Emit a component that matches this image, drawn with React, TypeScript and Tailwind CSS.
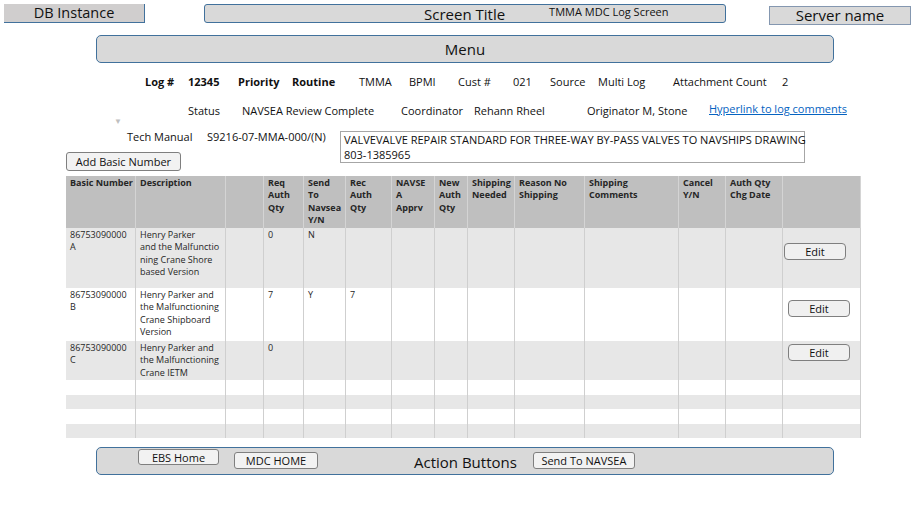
import React from "react";

const cols = "grid grid-cols-[70px_90px_38px_40px_42px_46px_43px_33px_47px_70px_94px_47px_57px_78px]";

const headers: React.ReactNode[] = [
  <>Basic Number</>,
  <>Description</>,
  <></>,
  <>Req<br />Auth<br />Qty</>,
  <>Send<br />To<br />Navsea<br />Y/N</>,
  <>Rec<br />Auth<br />Qty</>,
  <>NAVSE<br />A<br />Apprv</>,
  <>New<br />Auth<br />Qty</>,
  <>Shipping<br />Needed</>,
  <>Reason No<br />Shipping</>,
  <>Shipping<br />Comments</>,
  <>Cancel<br />Y/N</>,
  <>Auth Qty<br />Chg Date</>,
  <></>,
];

type Row = {
  h: string;
  bg: string;
  cells: React.ReactNode[];
  edit?: string;
};

const rows: Row[] = [
  {
    h: "h-[60px]",
    bg: "bg-[#e7e7e7]",
    cells: [
      <>86753090000<br />A</>,
      <>Henry Parker<br />and the Malfunctio<br />ning Crane Shore<br />based Version</>,
      <></>,
      <>0</>,
      <>N</>,
    ],
    edit: "mt-[14px] ml-[-3px]",
  },
  {
    h: "h-[53px]",
    bg: "bg-white",
    cells: [
      <>86753090000<br />B</>,
      <>Henry Parker and<br />the Malfunctioning<br />Crane Shipboard<br />Version</>,
      <></>,
      <>7</>,
      <>Y</>,
      <>7</>,
    ],
    edit: "mt-[11px] ml-[1px]",
  },
  {
    h: "h-[39px]",
    bg: "bg-[#e7e7e7]",
    cells: [
      <>86753090000<br />C</>,
      <>Henry Parker and<br />the Malfunctioning<br />Crane IETM</>,
      <></>,
      <>0</>,
    ],
    edit: "mt-[2px] ml-[1px]",
  },
  { h: "h-[15px]", bg: "bg-white", cells: [] },
  { h: "h-[14px]", bg: "bg-[#e7e7e7]", cells: [] },
  { h: "h-[15px]", bg: "bg-white", cells: [] },
  { h: "h-[14px]", bg: "bg-[#e7e7e7]", cells: [] },
];

function Btn({ children, className }: { children: React.ReactNode; className: string }) {
  return (
    <div
      className={
        "flex items-center justify-center rounded-[3px] border border-[#7f7f7f] bg-[#f2f2f2] text-[11px] leading-none text-[#111] " +
        className
      }
    >
      {children}
    </div>
  );
}

export default function App() {
  return (
    <div
      className="relative w-[919px] h-[528px] overflow-hidden bg-white text-[#111]"
      style={{ fontFamily: '"Open Sans", "Noto Sans", sans-serif' }}
    >
      {/* Top row */}
      <div className="flex items-start pt-[4px]">
        <div className="ml-[4px] w-[141px] h-[19px] bg-[#d0cece] border-r border-b border-[#41719c] text-[14.5px] leading-[18px] text-center">
          DB Instance
        </div>
        <div className="ml-[59px] w-[522px] h-[19px] rounded-[3px] border border-[#41719c] bg-[#d9d9d9] flex items-start">
          <span className="pl-[219px] text-[15px] leading-[18px]">Screen Title</span>
          <span className="ml-[44px] text-[11px] leading-[14px]">TMMA MDC Log Screen</span>
        </div>
        <div className="ml-[43px] mt-[2px] w-[142px] h-[19px] border border-[#8497b0] bg-[#d9d9d9] text-[15px] leading-[17px] text-center">
          Server name
        </div>
      </div>

      {/* Menu */}
      <div className="ml-[96px] mt-[10px] w-[738px] h-[28px] rounded-[5px] border border-[#41719c] bg-[#d9d9d9] flex items-center justify-center text-[15px]">
        Menu
      </div>

      {/* Info row 1 */}
      <div className="flex mt-[11px] h-[16px] pl-[145px] text-[11px] leading-[16px] whitespace-nowrap">
        <span className="w-[43px] font-bold">Log #</span>
        <span className="w-[50px] font-bold">12345</span>
        <span className="w-[54px] font-bold">Priority</span>
        <span className="w-[67px] font-bold">Routine</span>
        <span className="w-[50px]">TMMA</span>
        <span className="w-[49px]">BPMI</span>
        <span className="w-[55px]">Cust #</span>
        <span className="w-[37px]">021</span>
        <span className="w-[48px]">Source</span>
        <span className="w-[75px]">Multi Log</span>
        <span className="w-[109px]">Attachment Count</span>
        <span>2</span>
      </div>

      {/* Info row 2 */}
      <div className="flex mt-[13px] h-[16px] pl-[114px] text-[11px] leading-[16px] whitespace-nowrap">
        <span className="w-[74px] text-[8px] leading-[8px] text-[#bfbfbf] self-end translate-y-[6px]">▼</span>
        <span className="w-[54px]">Status</span>
        <span className="w-[159px]">NAVSEA Review Complete</span>
        <span className="w-[73px]">Coordinator</span>
        <span className="w-[113px]">Rehann Rheel</span>
        <span className="w-[122px]">Originator M, Stone</span>
        <span className="text-[#0563c1] underline -translate-y-[2px]">Hyperlink to log comments</span>
      </div>

      {/* Tech manual row */}
      <div className="flex items-start mt-[10px] pl-[66px] whitespace-nowrap">
        <div className="w-[274px] flex flex-col">
          <div className="flex h-[16px] pl-[61px] text-[11px] leading-[16px]">
            <span className="w-[80px]">Tech Manual</span>
            <span>S9216-07-MMA-000/(N)</span>
          </div>
          <Btn className="mt-[7px] w-[115px] h-[19px] !text-[11px]">Add Basic Number</Btn>
        </div>
        <div className="mt-[2px] w-[465px] h-[32px] border border-[#a6a6a6] px-[3px] text-[11px] leading-[15px]">
          VALVEVALVE REPAIR STANDARD FOR THREE-WAY BY-PASS VALVES TO NAVSHIPS DRAWING
          <br />
          803-1385965
        </div>
      </div>

      {/* Table */}
      <div className="ml-[66px] mt-[5px] w-[795px] text-[9px] leading-[12.4px] text-[#262626] whitespace-nowrap">
        <div className={cols + " h-[52px] bg-[#bfbfbf] font-bold"}>
          {headers.map((h, i) => (
            <div key={i} className="border-r border-[#d4d4d4] pl-[4px] pt-[1px]">
              {h}
            </div>
          ))}
        </div>
        {rows.map((r, ri) => (
          <div key={ri} className={cols + " " + r.h + " " + r.bg}>
            {Array.from({ length: 14 }).map((_, ci) => (
              <div key={ci} className="border-r border-[#cfcfcf] pl-[4px] pt-[1px]">
                {ci < 13 ? r.cells[ci] : null}
                {ci === 13 && r.edit ? (
                  <Btn className={r.edit + " w-[62px] h-[17px] rounded-[4px] !bg-[#f0f0f0]"}>Edit</Btn>
                ) : null}
              </div>
            ))}
          </div>
        ))}
      </div>

      {/* Action bar */}
      <div className="ml-[96px] mt-[9px] w-[738px] h-[28px] rounded-[5px] border border-[#41719c] bg-[#d9d9d9] flex items-start whitespace-nowrap">
        <Btn className="ml-[41px] mt-[1px] w-[81px] h-[16px]">EBS Home</Btn>
        <Btn className="ml-[15px] mt-[4px] w-[84px] h-[17px]">MDC HOME</Btn>
        <span className="ml-[96px] mt-[5px] text-[15px] leading-[18px]">Action Buttons</span>
        <Btn className="ml-[16px] mt-[4px] w-[102px] h-[17px]">Send To NAVSEA</Btn>
      </div>
    </div>
  );
}
